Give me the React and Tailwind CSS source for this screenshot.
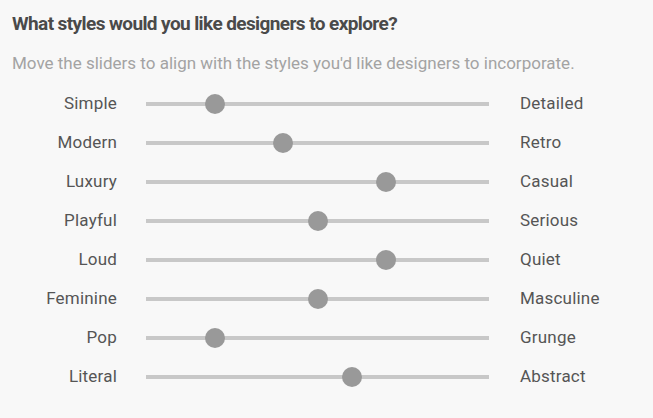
import React from "react";

const rows = [
  { left: "Simple", right: "Detailed", value: 2 },
  { left: "Modern", right: "Retro", value: 4 },
  { left: "Luxury", right: "Casual", value: 7 },
  { left: "Playful", right: "Serious", value: 5 },
  { left: "Loud", right: "Quiet", value: 7 },
  { left: "Feminine", right: "Masculine", value: 5 },
  { left: "Pop", right: "Grunge", value: 2 },
  { left: "Literal", right: "Abstract", value: 6 },
];

const StyleSlider = ({ left, right, value }) => (
  <div className="flex items-center h-[39px]">
    <div className="w-[117px] text-right text-[#555] text-[17px] tracking-[0.2px]">{left}</div>
    <div className="relative ml-[29px] w-[343px] h-[4px] bg-[#c8c8c8]">
      {/* thumb sits on the track, value out of 10 */}
      <div
        className="absolute top-1/2 w-[20px] h-[20px] -mt-[10px] -ml-[10px] rounded-full bg-[#999]"
        style={{ left: `${value * 10}%` }}
      />
    </div>
    <div className="ml-[31px] text-[#555] text-[17px] tracking-[0.2px]">{right}</div>
  </div>
);

export default function App() {
  return (
    <div
      className="w-[653px] h-[418px] bg-[#f8f8f8] pl-[12px] pt-[11px]"
      style={{ fontFamily: "Roboto, 'Liberation Sans', sans-serif" }}
    >
      <h2 className="text-[19px] font-bold text-[#4a4a4a] leading-[26px] tracking-[-0.6px]">
        What styles would you like designers to explore?
      </h2>
      <p className="mt-[14px] text-[17px] text-[#a3a3a3] leading-[24px]">
        Move the sliders to align with the styles you'd like designers to incorporate.
      </p>
      <div className="mt-[9px] -ml-[12px]">
        {rows.map((r) => (
          <StyleSlider key={r.left} {...r} />
        ))}
      </div>
    </div>
  );
}
